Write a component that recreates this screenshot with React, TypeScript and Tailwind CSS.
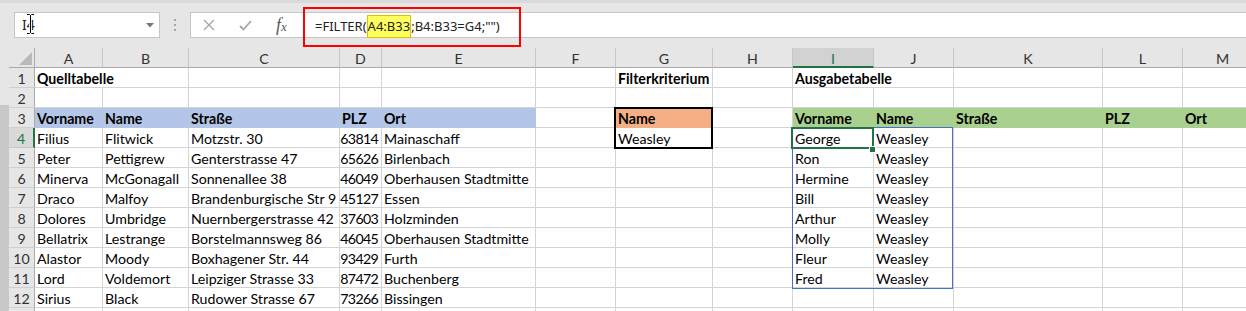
import React from 'react';

type Fill = 'blue' | 'orange' | 'green';
type Cell = { t?: string; b?: boolean; r?: boolean; fill?: Fill; span?: number };

const COLS = ['A', 'B', 'C', 'D', 'E', 'F', 'G', 'H', 'I', 'J', 'K', 'L', 'M'];

const SRC: string[][] = [
  ['Filius', 'Flitwick', 'Motzstr. 30', '63814', 'Mainaschaff'],
  ['Peter', 'Pettigrew', 'Genterstrasse 47', '65626', 'Birlenbach'],
  ['Minerva', 'McGonagall', 'Sonnenallee 38', '46049', 'Oberhausen Stadtmitte'],
  ['Draco', 'Malfoy', 'Brandenburgische Str 9', '45127', 'Essen'],
  ['Dolores', 'Umbridge', 'Nuernbergerstrasse 42', '37603', 'Holzminden'],
  ['Bellatrix', 'Lestrange', 'Borstelmannsweg 86', '46045', 'Oberhausen Stadtmitte'],
  ['Alastor', 'Moody', 'Boxhagener Str. 44', '93429', 'Furth'],
  ['Lord', 'Voldemort', 'Leipziger Strasse 33', '87472', 'Buchenberg'],
  ['Sirius', 'Black', 'Rudower Strasse 67', '73266', 'Bissingen'],
];

const OUT = ['George', 'Ron', 'Hermine', 'Bill', 'Arthur', 'Molly', 'Fleur', 'Fred'];

const FILL: Record<Fill, string> = {
  blue: 'bg-[#b4c6e7] border-[#b4c6e7]',
  orange: 'bg-[#f4b084] border-[#f4b084]',
  green: 'bg-[#a9d08e] border-[#a9d08e]',
};

function buildRows(): Cell[][] {
  const empty = (n: number): Cell[] => Array.from({ length: n }, () => ({}));
  const rows: Cell[][] = [];
  rows.push([
    { t: 'Quelltabelle', b: true, span: 2 },
    {}, {}, {}, {},
    { t: 'Filterkriterium', b: true },
    {},
    { t: 'Ausgabetabelle', b: true, span: 2 },
    {}, {}, {},
  ]);
  rows.push(empty(13));
  rows.push([
    { t: 'Vorname', b: true, fill: 'blue' },
    { t: 'Name', b: true, fill: 'blue' },
    { t: 'Straße', b: true, fill: 'blue' },
    { t: 'PLZ', b: true, fill: 'blue' },
    { t: 'Ort', b: true, fill: 'blue' },
    {},
    { t: 'Name', b: true, fill: 'orange' },
    {},
    { t: 'Vorname', b: true, fill: 'green' },
    { t: 'Name', b: true, fill: 'green' },
    { t: 'Straße', b: true, fill: 'green' },
    { t: 'PLZ', b: true, fill: 'green' },
    { t: 'Ort', b: true, fill: 'green' },
  ]);
  for (let i = 0; i < SRC.length; i++) {
    const s = SRC[i];
    rows.push([
      { t: s[0] },
      { t: s[1] },
      { t: s[2] },
      { t: s[3], r: true },
      { t: s[4] },
      {},
      i === 0 ? { t: 'Weasley' } : {},
      {},
      OUT[i] ? { t: OUT[i] } : {},
      OUT[i] ? { t: 'Weasley' } : {},
      {}, {}, {},
    ]);
  }
  rows.push(empty(13));
  return rows;
}

function NameBox() {
  return (
    <div className="relative ml-[14px] w-[146px] h-[26px] bg-white border border-[#c6c6c6] flex items-center justify-between pl-[7px] pr-[5px] shrink-0">
      <span className="font-['Noto_Sans',sans-serif] text-[14px] text-[#222] leading-[20px]">I4</span>
      <svg width="8" height="5" viewBox="0 0 8 5">
        <path d="M0 0 L8 0 L4 4.5 Z" fill="#777" />
      </svg>
      <svg className="absolute left-[11px] top-[0px]" width="9" height="22" viewBox="0 0 9 22">
        <path d="M1 1.5 H3.5 L4.5 2.5 L5.5 1.5 H8 M4.5 2.5 V19.5 M1 20.5 H3.5 L4.5 19.5 L5.5 20.5 H8" stroke="#fff" strokeWidth="2.6" fill="none" />
        <path d="M1 1.5 H3.5 L4.5 2.5 L5.5 1.5 H8 M4.5 2.5 V19.5 M1 20.5 H3.5 L4.5 19.5 L5.5 20.5 H8" stroke="#000" strokeWidth="1" fill="none" />
      </svg>
    </div>
  );
}

function FormulaBar() {
  return (
    <div className="flex-1 -mr-[10px] h-[26px] bg-white border border-[#c6c6c6] flex min-w-0">
      <div className="w-[109px] shrink-0 flex items-center">
        <div className="w-[36px] flex justify-center">
          <svg width="12" height="12" viewBox="0 0 12 12">
            <path d="M1 1 L11 11 M11 1 L1 11" stroke="#a6a6a6" strokeWidth="1.4" />
          </svg>
        </div>
        <div className="w-[36px] flex justify-center">
          <svg width="13" height="11" viewBox="0 0 13 11">
            <path d="M1 6 L4.5 9.5 L12 1" stroke="#a6a6a6" strokeWidth="1.8" fill="none" />
          </svg>
        </div>
        <div className="w-[37px] flex justify-center items-baseline text-[#595959] font-['Liberation_Serif',serif] italic">
          <span className="text-[18px] leading-[18px]">f</span>
          <span className="text-[13px] leading-[13px]">x</span>
        </div>
      </div>
      <div className="pl-[15px] pt-[2px] leading-[20px] whitespace-nowrap font-['Noto_Sans',sans-serif] text-[13px] text-[#222]">
        <span>=FILTER(</span>
        <span className="inline-block bg-[#ffff5e] border border-[#e2c000] pt-[2px] pb-[3px] leading-[16px]">A4:B33</span>
        <span>;B4:B33=G4;"")</span>
      </div>
    </div>
  );
}

export default function App() {
  const rows = buildRows();
  return (
    <div className="relative w-[1246px] h-[311px] overflow-hidden bg-white font-['Lato',sans-serif]">
      <div className="h-[3px] bg-[#d9d9d9]" />
      <div className="h-[45px] bg-[#e6e6e6] flex items-start pt-[9px]">
        <NameBox />
        <div className="w-[30px] shrink-0 flex flex-col items-center gap-[3px] pt-[7px]">
          <div className="w-[2px] h-[2px] bg-[#a6a6a6]" />
          <div className="w-[2px] h-[2px] bg-[#a6a6a6]" />
          <div className="w-[2px] h-[2px] bg-[#a6a6a6]" />
        </div>
        <FormulaBar />
      </div>

      <div className="relative flex">
        <div className="w-[9px] shrink-0 flex flex-col">
          <div className="h-[57px] bg-[#e6e6e6]" />
          <div className="h-[300px] bg-[#c8c8c8]" />
        </div>
        <div className="grid shrink-0 grid-cols-[26px_68px_86px_151px_42px_154px_80px_97px_80px_81px_80px_149px_80px_80px] auto-rows-[20px] text-[14.2px] leading-[19px]">
          <div className="relative bg-[#e6e6e6] border-r border-b border-r-[#ababab] border-b-[#ababab]">
            <svg className="absolute left-[10px] top-[4px]" width="14" height="14" viewBox="0 0 14 14">
              <path d="M13 0 L13 13 L0 13 Z" fill="#b9b9b9" />
            </svg>
          </div>
          {COLS.map((c) =>
            c === 'I' ? (
              <div key={c} className="bg-[#d2d2d2] pt-[1px] border-r border-b-2 border-r-[#c6c6c6] border-b-[#217346] text-center text-[#217346]">
                {c}
              </div>
            ) : (
              <div key={c} className="bg-[#e6e6e6] pt-[1px] border-r border-b border-r-[#c6c6c6] border-b-[#ababab] text-center text-[#333]">
                {c}
              </div>
            )
          )}
          {rows.map((row, ri) => (
            <React.Fragment key={ri}>
              {ri === 3 ? (
                <div className="bg-[#d9d9d9] pt-[1px] border-r-2 border-b border-r-[#217346] border-b-[#c6c6c6] text-center text-[#217346]">
                  {ri + 1}
                </div>
              ) : (
                <div className="bg-[#e6e6e6] pt-[1px] border-r border-b border-r-[#ababab] border-b-[#cfcfcf] text-center text-[#333]">
                  {ri < 12 ? ri + 1 : ''}
                </div>
              )}
              {row.map((c, ci) => (
                <div
                  key={ci}
                  className={[
                    'pt-[1px] border-r border-b whitespace-nowrap overflow-hidden text-black',
                    c.fill ? FILL[c.fill] : 'bg-white border-[#d4d4d4]',
                    c.b ? 'font-bold' : '',
                    c.r ? 'text-right pr-[3px] tracking-[-0.7px]' : 'pl-[2px]',
                    c.span === 2 ? 'col-span-2' : '',
                  ].join(' ')}
                >
                  {c.t ?? ''}
                </div>
              ))}
            </React.Fragment>
          ))}
        </div>

        {/* Thick border around G3:G4 */}
        <div className="absolute left-[614px] top-[59px] w-[99px] h-[42px] border-2 border-black pointer-events-none" />
        {/* Spill range I4:J11 */}
        <div className="absolute left-[792px] top-[79px] w-[161px] h-[162px] border border-[#4472c4] pointer-events-none" />
        {/* Active cell I4 */}
        <div className="absolute left-[791px] top-[79px] w-[83px] h-[22px] border-2 border-[#217346] pointer-events-none" />
        <div className="absolute left-[869px] top-[98px] w-[7px] h-[7px] bg-[#217346] border border-white" />
      </div>

      {/* Red annotation frame */}
      <div className="absolute left-[303px] top-[7px] w-[218px] h-[40px] border-2 border-[#ff0000] pointer-events-none" />
    </div>
  );
}
